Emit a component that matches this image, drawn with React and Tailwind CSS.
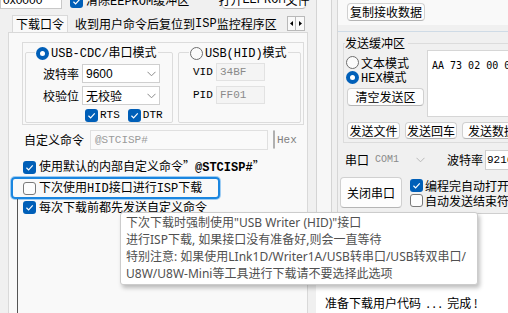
import React from "react";

const SANS = "font-['Noto_Sans_CJK_SC','Noto_Sans',sans-serif]";
const MONO = "font-['Liberation_Mono','Noto_Sans_CJK_SC',monospace]";

function M({ children, className = "" }) {
  return <span className={`${MONO} ${className}`}>{children}</span>;
}

function Check({ on, gray }) {
  if (on)
    return (
      <span className="w-[13px] h-[13px] rounded-[3px] bg-[#005fb8] flex items-center justify-center shrink-0">
        <svg width="9" height="9" viewBox="0 0 10 10">
          <path d="M1.6 5.3 L4 7.6 L8.6 2.6" stroke="white" strokeWidth="1.3" fill="none" />
        </svg>
      </span>
    );
  return (
    <span
      className={`w-[13px] h-[13px] rounded-[3px] border bg-[#fdfdfd] shrink-0 ${
        gray ? "border-[#b0b0b0]" : "border-[#7a7a7a]"
      }`}
    />
  );
}

function Radio({ on }) {
  if (on)
    return (
      <span className="w-[13px] h-[13px] rounded-full bg-[#005fb8] flex items-center justify-center shrink-0">
        <span className="w-[5px] h-[5px] rounded-full bg-white" />
      </span>
    );
  return <span className="w-[13px] h-[13px] rounded-full border border-[#6e6e6e] bg-[#fbfbfb] shrink-0" />;
}

function Chev({ c = "#8a8a8a" }) {
  return (
    <svg width="9" height="6" viewBox="0 0 9 6">
      <path d="M0.5 0.8 L4.5 4.8 L8.5 0.8" fill="none" stroke={c} strokeWidth="1" />
    </svg>
  );
}

function Btn({ children, className = "" }) {
  return (
    <div
      className={`flex items-center justify-center bg-[#fdfdfd] border border-[#d0d0d0] border-b-[#b5b5b5] rounded-[4px] whitespace-nowrap shrink-0 ${className}`}
    >
      {children}
    </div>
  );
}

export default function App() {
  return (
    <div
      className={`${SANS} relative w-[508px] h-[313px] overflow-hidden bg-[#f0f0f0] text-[12px] text-black flex leading-none`}
    >
      {/* LEFT COLUMN */}
      <div className="w-[316px] flex flex-col shrink-0">
        {/* top strip (cut off) */}
        <div className="h-[13px] overflow-hidden shrink-0">
          <div className="flex items-start -mt-[10px]">
            <div className="w-[62px] h-[19px] bg-white border border-[#c8c8c8] flex items-center pl-[2px] shrink-0">
              <span className="font-['Liberation_Sans',sans-serif]">0x0000</span>
            </div>
            <div className="ml-[8px] mt-[5px]">
              <Check on />
            </div>
            <span className="ml-[3px] mt-[4px] whitespace-nowrap">
              清除<M>EEPROM</M>缓冲区
            </span>
            <Btn className="ml-auto mr-[10px] w-[84px] h-[19px]">
              打开<M>EEPROM</M>文件
            </Btn>
          </div>
        </div>

        {/* tabs */}
        <div className="h-[19px] flex items-end shrink-0">
          <div className="ml-[12px] w-[56px] h-[17px] bg-[#f9f9f9] border border-b-0 border-[#d9d9d9] flex items-center justify-center">
            下载口令
          </div>
          <div className="ml-[7px] h-[17px] flex items-center whitespace-nowrap">
            收到用户命令后复位到<M>ISP</M>监控程序区
          </div>
          <div className="ml-auto mr-[11px] mb-[1px] flex">
            <div className="w-[9px] h-[15px] bg-[#f9f9f9] border border-[#b9b9b9] flex items-center justify-center">
              <svg width="3" height="5" viewBox="0 0 3 5">
                <path d="M3 0 L0 2.5 L3 5 Z" fill="#000" />
              </svg>
            </div>
            <div className="w-[9px] h-[15px] bg-[#f9f9f9] border border-l-0 border-[#b9b9b9] flex items-center justify-center">
              <svg width="3" height="5" viewBox="0 0 3 5">
                <path d="M0 0 L3 2.5 L0 5 Z" fill="#000" />
              </svg>
            </div>
          </div>
        </div>

        {/* tab body */}
        <div className="ml-[8px] w-[300px] flex-1 bg-[#f9f9f9] border-l border-t border-r border-[#d9d9d9] flex flex-col">
          {/* mode frame */}
          <div className="mt-[9px] ml-[13px] w-[282px] h-[83px] border border-[#dcdcdc] flex pt-[9px] pl-[2px] gap-[5px] shrink-0">
            {/* USB-CDC group */}
            <div className="relative w-[148px] h-[71px] border border-[#dcdcdc] rounded-[2px] flex flex-col pt-[11px] gap-[3px]">
              <div className="absolute left-[9px] -top-[7px] flex items-center gap-[2px] bg-[#f9f9f9] px-[1px]">
                <Radio on />
                <span className="whitespace-nowrap">
                  <M>USB-CDC/</M>串口模式
                </span>
              </div>
              <div className="flex items-center h-[19px]">
                <span className="w-[56px] text-right pr-[3px]">波特率</span>
                <div className="w-[78px] h-[19px] bg-white border border-[#cfcfcf] flex items-center justify-between px-[3px]">
                  <span className="font-['Liberation_Sans',sans-serif]">9600</span>
                  <Chev />
                </div>
              </div>
              <div className="flex items-center h-[19px]">
                <span className="w-[56px] text-right pr-[3px]">校验位</span>
                <div className="w-[78px] h-[19px] bg-white border border-[#cfcfcf] flex items-center justify-between px-[3px]">
                  <span>无校验</span>
                  <Chev />
                </div>
              </div>
              <div className="flex items-center pl-[59px] mt-[1px]">
                <Check on />
                <M className="ml-[2px] text-[11px]">RTS</M>
                <span className="ml-[8px]">
                  <Check on />
                </span>
                <M className="ml-[2px] text-[11px]">DTR</M>
              </div>
            </div>
            {/* USB HID group */}
            <div className="relative w-[123px] h-[71px] border border-[#dcdcdc] rounded-[2px] flex flex-col pt-[10px] gap-[5px] pl-[14px]">
              <div className="absolute left-[10px] -top-[7px] flex items-center gap-[2px] bg-[#f9f9f9] px-[1px]">
                <Radio />
                <span className="whitespace-nowrap">
                  <M>USB(HID)</M>模式
                </span>
              </div>
              <div className="flex items-center h-[18px]">
                <M className="w-[23px] text-[11px]">VID</M>
                <div className="w-[49px] h-[18px] bg-[#f4f4f4] border border-[#e2e2e2] flex items-center pl-[3px]">
                  <M className="text-[11px] text-[#8a8a8a]">34BF</M>
                </div>
              </div>
              <div className="flex items-center h-[18px]">
                <M className="w-[23px] text-[11px]">PID</M>
                <div className="w-[49px] h-[18px] bg-[#f4f4f4] border border-[#e2e2e2] flex items-center pl-[3px]">
                  <M className="text-[11px] text-[#8a8a8a]">FF01</M>
                </div>
              </div>
            </div>
          </div>

          {/* custom command */}
          <div className="mt-[5px] h-[20px] flex items-center shrink-0">
            <span className="ml-[15px] w-[60px] whitespace-nowrap">自定义命令</span>
            <div className="ml-[6px] w-[178px] h-[20px] bg-[#fafafa] border border-[#e0e0e0] flex items-center pl-[4px]">
              <M className="text-[11px] text-[#9a9a9a]">@STCISP#</M>
            </div>
            <span className="ml-[5px]">
              <Check gray />
            </span>
            <M className="ml-[2px] text-[11px] text-[#808080]">Hex</M>
          </div>

          {/* checkbox rows */}
          <div className="mt-[9px] h-[16px] flex items-center pl-[14px] shrink-0">
            <Check on />
            <span className="ml-[3px] whitespace-nowrap">
              使用默认的内部自定义命令”<M className="font-bold">@STCISP#</M>”
            </span>
          </div>
          <div className="mt-[2px] ml-[2px] w-[209px] h-[22px] border-2 border-[#1a86e0] rounded-[4px] shadow-[0_0_0_1px_#9fcdf3] flex items-center pl-[10px] shrink-0">
            <Check />
            <span className="ml-[3px] whitespace-nowrap">
              下次使用<M>HID</M>接口进行<M>ISP</M>下载
            </span>
          </div>
          <div className="flex-1 ml-[8px] border-l border-[#555555]">
            <div className="h-[16px] flex items-center pl-[5px]">
              <Check on />
              <span className="ml-[3px] whitespace-nowrap">每次下载前都先发送自定义命令</span>
            </div>
          </div>
        </div>
      </div>

      {/* RIGHT SIDE */}
      <div className="flex-1 flex flex-col">
        <div className="h-[213px] flex shrink-0">
          <div className="w-[16px] border-l border-r border-[#d4d4d4] bg-[#f7f7f7] shrink-0" />
          <div className="w-[5px] shrink-0" />
          <div className="flex-1 flex flex-col border-l border-[#d6d6d6] min-w-0">
            <div className="h-[25px] bg-[#f9f9f9] pl-[9px] pt-[3px] shrink-0">
              <Btn className="w-[78px] h-[18px]">复制接收数据</Btn>
            </div>
            <div className="h-[7px] border-b border-[#cfdbe6] shrink-0" />
            {/* send buffer group */}
            <div className="mt-[11px] ml-[5px] h-[100px] border-l border-t border-b border-[#dcdcdc] relative flex flex-col shrink-0">
              <div className="absolute left-[1px] -top-[7px] bg-[#f0f0f0] pr-[3px] whitespace-nowrap">发送缓冲区</div>
              <div className="h-[74px] flex pt-[11px]">
                <div className="w-[83px] pl-[2px] flex flex-col shrink-0">
                  <div className="h-[15px] flex items-center">
                    <Radio />
                    <span className="ml-[2px]">文本模式</span>
                  </div>
                  <div className="h-[15px] flex items-center">
                    <Radio on />
                    <span className="ml-[2px]">
                      <M>HEX</M>模式
                    </span>
                  </div>
                  <Btn className="w-[77px] h-[18px] mt-[3px] ml-[1px]">清空发送区</Btn>
                </div>
                <div className="-mt-[5px] h-[67px] flex-1 bg-white border border-r-0 border-[#d6d6d6] pl-[4px] pt-[7px] whitespace-nowrap overflow-hidden">
                  <span className="font-['DejaVu_Sans_Mono',monospace] text-[10px]">AA 73 02 00 00</span>
                </div>
              </div>
              <div className="mt-[4px] h-[17px] flex pl-[3px] gap-[5px]">
                <Btn className="w-[53px] h-[17px]">发送文件</Btn>
                <Btn className="w-[52px] h-[17px]">发送回车</Btn>
                <Btn className="w-[60px] h-[17px]">发送数据</Btn>
              </div>
            </div>
            {/* port row */}
            <div className="mt-[7px] h-[20px] flex items-center pl-[7px] shrink-0 whitespace-nowrap">
              <span className="w-[26px]">串口</span>
              <div className="ml-[1px] w-[56px] h-[20px] flex items-center justify-between px-[3px] shrink-0">
                <M className="text-[10px] text-[#8a8a8a]">COM1</M>
                <Chev c="#b8b8b8" />
              </div>
              <span className="ml-[19px]">波特率</span>
              <div className="ml-[2px] w-[30px] h-[20px] bg-white border border-[#cfcfcf] flex items-center pl-[1px] overflow-hidden shrink-0">
                <M className="text-[11px]">921600</M>
              </div>
            </div>
            {/* close port row */}
            <div className="mt-[7px] flex shrink-0 whitespace-nowrap">
              <Btn className="ml-[2px] w-[62px] h-[31px]">关闭串口</Btn>
              <div className="ml-[8px] flex flex-col pt-[1px]">
                <div className="h-[15px] flex items-center">
                  <Check on />
                  <span className="ml-[2px]">编程完自动打开</span>
                </div>
                <div className="h-[15px] flex items-center">
                  <Check />
                  <span className="ml-[2px]">自动发送结束符</span>
                </div>
              </div>
            </div>
          </div>
        </div>
        {/* log area */}
        <div className="flex-1 bg-white border-t border-[#cfcfcf] pl-[9px] pt-[83px] whitespace-pre">
          准备下载用户代码  . . .  完成 !
        </div>
      </div>

      {/* tooltip */}
      <div className="absolute left-[120px] top-[212px] w-[358px] h-[73px] bg-white border border-[#cccccc] rounded-[3px] shadow-[2px_3px_4px_rgba(0,0,0,0.25)] px-[5px] pt-[1px] text-[12px] leading-[17px] text-[#505050] font-['Noto_Sans','Noto_Sans_CJK_SC',sans-serif] whitespace-nowrap">
        <div>下次下载时强制使用"USB Writer (HID)"接口</div>
        <div>进行ISP下载, 如果接口没有准备好,则会一直等待</div>
        <div>特别注意: 如果使用LInk1D/Writer1A/USB转串口/USB转双串口/</div>
        <div>U8W/U8W-Mini等工具进行下载请不要选择此选项</div>
      </div>
    </div>
  );
}
